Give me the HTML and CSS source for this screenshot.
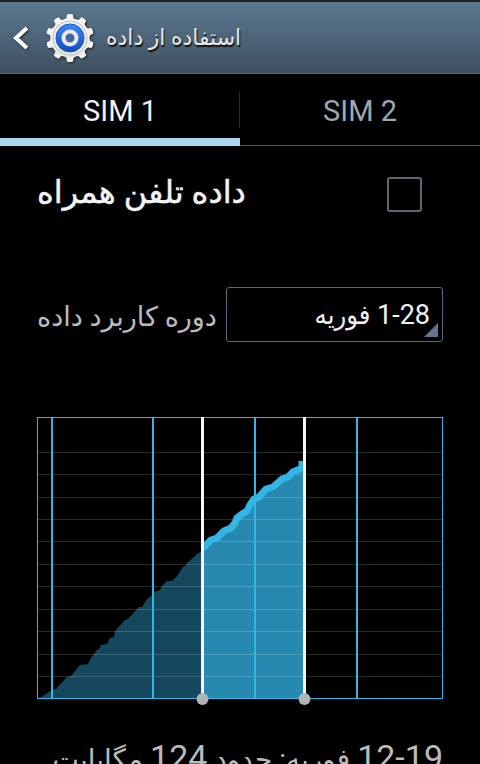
FILE: index.html
```html
<!DOCTYPE html>
<html lang="fa">
<head>
<meta charset="utf-8">
<meta name="viewport" content="width=device-width, initial-scale=1">
<title>استفاده از داده</title>
<link rel="stylesheet" href="styles.css">
</head>
<body>
<header class="bar">
  <button class="back" type="button" aria-label="بازگشت">
    <svg width="16" height="24" viewBox="0 0 16 24"><path d="M14 2 3 12l11 10" fill="none" stroke="#fff" stroke-width="4"/></svg>
  </button>
  <svg class="gear" width="50" height="50" viewBox="-25 -25 50 50" aria-hidden="true">
    <defs>
      <linearGradient id="metal" x1="0" y1="0" x2="0" y2="1"><stop offset="0" stop-color="#fff"/><stop offset="1" stop-color="#e6e6e6"/></linearGradient>
      <linearGradient id="blue" x1="0" y1="0" x2="0" y2="1"><stop offset="0" stop-color="#3d86ff"/><stop offset="1" stop-color="#0b4fb8"/></linearGradient>
      <path id="tooth" d="M-6-18-3.500-20-3-23.500Q0-24.500 3-23.500L3.500-20 6-18z"/>
    </defs>
    <g fill="url(#metal)">
      <use href="#tooth"/><use href="#tooth" transform="rotate(36)"/><use href="#tooth" transform="rotate(72)"/><use href="#tooth" transform="rotate(108)"/><use href="#tooth" transform="rotate(144)"/><use href="#tooth" transform="rotate(180)"/><use href="#tooth" transform="rotate(216)"/><use href="#tooth" transform="rotate(252)"/><use href="#tooth" transform="rotate(288)"/><use href="#tooth" transform="rotate(324)"/>
      <circle r="19.500"/>
    </g>
    <circle r="17" fill="#ececec" stroke="#bdbdbd"/>
    <circle r="14" fill="url(#blue)" stroke="#2459b0"/>
    <circle r="6.500" fill="#47679b" stroke="#e9e9e9" stroke-width="4"/>
  </svg>
  <h1 class="title" dir="rtl">استفاده از داده</h1>
</header>

<nav class="tabs">
  <button class="tab selected" type="button" aria-pressed="true">SIM 1</button>
  <button class="tab" type="button" aria-pressed="false">SIM 2</button>
</nav>

<main class="content">
  <div class="row">
    <label class="mobile" for="mobile" dir="rtl">داده تلفن همراه</label>
    <input class="check" id="mobile" type="checkbox">
  </div>
  <div class="row cycle">
    <label class="cycle-label" for="cycle" dir="rtl">دوره کاربرد داده</label>
    <span class="spinner">
      <select id="cycle" dir="rtl"><option>1-28 فوریه</option></select>
    </span>
  </div>

  <svg class="chart" viewBox="37 417 406 282" role="img" aria-labelledby="summary">
    <path class="past" d="M38 698 41 697 46 694 52 690 56 689 67 677 71 676 80 665 88 664 91 658 97 650 99 649 101 645 107 644 110 638 114 637 115 631 125 620 128 619 139 607 142 607 147 599 153 595 154 592 160 590 162 586 167 581 172 581 177 576 183 567 185 566 187 563 197 554 199 553 203 550V698z"/>
    <path class="current" d="M203 549 211 541 217 539 224 531 231 528 235 523 237 518 242 514 247 511 250 505 254 499 259 497 266 489 273 487 282 479 288 477 293 472 300 469 304 466V698H203z"/>
    <path class="grid" d="M38 452.500h404m-404 22h404m-404 23h404m-404 22h404m-404 22h404m-404 23h404m-404 22h404m-404 23h404m-404 22h404m-404 23h404m-404 22h404"/>
    <path class="line" d="M203 548 211 540 217 538 224 531 231 528 235 523 237 518 242 514 247 511 250 505 254 499 259 497 266 489 273 487 282 479 288 477 293 472 300 469 302 467V461"/>
    <path class="weeks" d="M52 418v280M153 418v280M255 418v280M357 418v280"/>
    <rect class="frame" x="37.500" y="417.500" width="405" height="281"/>
    <path class="sweep" d="M202.500 417v282M304.500 417v282"/>
    <circle class="knob" cx="202.500" cy="699" r="6"/>
    <circle class="knob" cx="304.500" cy="699" r="6"/>
  </svg>

  <p class="summary" id="summary" dir="rtl"><span class="figure">12-19</span> فوریه: حدود <span class="figure">124</span> مگابایت</p>
</main>
</body>
</html>
```

FILE: styles.css
```css
* {
  box-sizing: border-box;
}

body {
  display: flex;
  flex-direction: column;
  height: 100vh;
  margin: 0;
  overflow: hidden;
  background: #000;
  color: #f3f3f3;
  font-family: Roboto, "DejaVu Sans", sans-serif;
}

button {
  border: 0;
  padding: 0;
  background: none;
  color: inherit;
  font: inherit;
}

.bar {
  display: flex;
  flex: none;
  align-items: center;
  height: 74px;
  padding-left: 13px;
  border-top: 2px solid #222;
  border-bottom: 1px solid #526b7c;
  background: linear-gradient(#5b7990, #404f60);
}

.back {
  display: flex;
  width: 32px;
}

.back svg,
.gear {
  filter: drop-shadow(1px 1px 1px #222);
}

.title {
  margin: 0 0 0 11px;
  color: #e6e6e6;
  font-size: 22px;
  font-weight: 400;
  line-height: 28px;
  text-shadow: 1px 2px 1px #111;
}

.tabs {
  display: flex;
  flex: none;
  height: 72px;
}

.tab {
  position: relative;
  flex: 1;
  border-bottom: 1px solid #4c5d69;
  padding-top: 3px;
  color: #9fa7ae;
  font-size: 29px;
}

.tab.selected {
  border-bottom: 8px solid #a9d6f1;
  padding-top: 10px;
  color: #f3f3f3;
}

.tab + .tab::before {
  content: "";
  position: absolute;
  top: 18px;
  left: -1px;
  width: 1px;
  height: 36px;
  background: #2a2a2a;
}

.content {
  flex: 1;
  min-height: 0;
  padding: 0 37px;
  overflow-y: auto;
  scrollbar-width: none;
}

.row {
  display: flex;
  align-items: center;
  justify-content: space-between;
  height: 96px;
}

.mobile {
  padding-bottom: 4px;
  font-size: 32px;
  -webkit-text-stroke: 0.5px;
}

.check {
  appearance: none;
  width: 35px;
  height: 35px;
  margin: 0 21px 0 0;
  border: 2px solid #606670;
  border-radius: 3px;
}

.cycle {
  gap: 8px;
  height: 55px;
  margin-top: 45px;
}

.cycle-label {
  padding-top: 4px;
  color: #bbb;
  font-size: 27px;
  white-space: nowrap;
}

.spinner {
  position: relative;
  flex: 1;
  max-width: 217px;
  height: 55px;
}

.spinner select {
  appearance: none;
  width: 100%;
  height: 100%;
  padding: 0 12px;
  border: 1px solid #526b7c;
  border-radius: 3px;
  background: #000;
  color: #f3f3f3;
  font: 27px Roboto, "DejaVu Sans Condensed", "DejaVu Sans", sans-serif;
}

.spinner::after {
  content: "";
  position: absolute;
  right: 5px;
  bottom: 5px;
  width: 14px;
  height: 14px;
  background: #63758c;
  clip-path: polygon(100% 0, 100% 100%, 0 100%);
  pointer-events: none;
}

.chart {
  display: block;
  width: 100%;
  margin-top: 75px;
  overflow: visible;
}

.past {
  fill: #15485c;
}

.current {
  fill: #2789af;
}

.grid,
.line,
.weeks,
.frame,
.sweep {
  fill: none;
}

.grid {
  stroke: #fff;
  stroke-opacity: 0.16;
}

.line {
  stroke: #33b5e5;
  stroke-width: 7;
  stroke-linejoin: round;
}

.weeks {
  stroke: #33b5e5;
  stroke-width: 2;
}

.frame {
  stroke: #33b5e5;
}

.sweep {
  stroke: #f6f6f6;
  stroke-width: 3;
}

.knob {
  fill: #b2b2b2;
}

.summary {
  margin: 38px 0 0;
  color: #bbb;
  font-size: 28px;
  white-space: nowrap;
}

.figure {
  font-size: 34px;
}
```
